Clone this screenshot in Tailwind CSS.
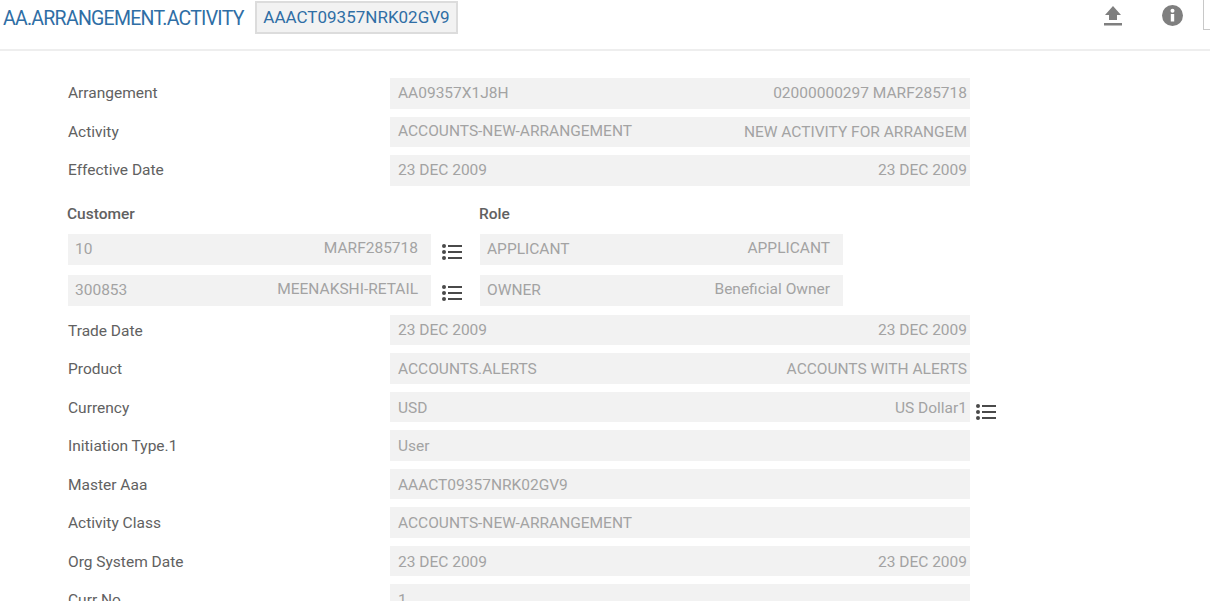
<!DOCTYPE html>
<html><head><meta charset="utf-8"><script src="https://cdn.jsdelivr.net/npm/@tailwindcss/browser@4"></script></head>
<body class="bg-white overflow-hidden font-['Roboto',sans-serif]">
<div class="h-[601px] w-[1210px] overflow-hidden">
<header class="h-[51px] border-b-2 border-[#eeeeee] flex items-start pl-[3px] relative">
  <h1 class="w-[241px] whitespace-nowrap text-[19.5px] tracking-[-0.74px] text-[#2f6ea5] leading-[36px] pt-px">AA.ARRANGEMENT.ACTIVITY</h1>
  <div class="ml-[11px] mt-px h-[33px] w-[203px] bg-[#f2f2f2] border-2 border-[#dcdcdc] text-[#2f6ea5] text-[17px] leading-[29px] text-center">AAACT09357NRK02GV9</div>
  <svg class="ml-[645px] mt-[5px]" width="20" height="22" viewBox="0 0 20 22"><path d="M10 1 L18 10 H14 V15 H6 V10 H2 Z M1 18 H19 V20.5 H1 Z" fill="#7f7f7f"/></svg>
  <svg class="ml-[39px] mt-[5px]" width="21" height="21" viewBox="0 0 21 21"><circle cx="10.5" cy="10.5" r="10.5" fill="#7f7f7f"/><rect x="8.8" y="9" width="3.4" height="7.5" fill="#fff"/><circle cx="10.5" cy="5.8" r="2" fill="#fff"/></svg>
  <div class="absolute left-[1203px] top-0 w-[7px] h-[30px] border-l border-b border-[#c8c8c8]"></div>
</header>

<main class="pt-[27px] text-[15.5px]">
  <div class="flex flex-col gap-[8px]">
    <div class="flex h-[30.5px] items-center"><span class="pl-[68px] w-[390px] text-[#616161] pt-px">Arrangement</span><div class="w-[580px] h-full bg-[#f2f2f2] flex justify-between items-center pl-2 pr-[3px] text-[#a3a3a3]"><span>AA09357X1J8H</span><span>02000000297 MARF285718</span></div></div>
    <div class="flex h-[30.5px] items-center"><span class="pl-[68px] w-[390px] text-[#616161] pt-px">Activity</span><div class="w-[580px] h-full bg-[#f2f2f2] flex justify-between items-center pl-2 pr-[3px] text-[#a3a3a3]"><span>ACCOUNTS-NEW-ARRANGEMENT</span><span class="pt-px">NEW ACTIVITY FOR ARRANGEM</span></div></div>
    <div class="flex h-[30.5px] items-center"><span class="pl-[68px] w-[390px] text-[#616161] pt-px">Effective Date</span><div class="w-[580px] h-full bg-[#f2f2f2] flex justify-between items-center pl-2 pr-[3px] text-[#a3a3a3]"><span>23 DEC 2009</span><span class="pt-px">23 DEC 2009</span></div></div>
  </div>

  <div class="flex mt-[17px] h-[22px] text-[#616161] font-medium text-[15.5px] leading-[22px]"><span class="pl-[67px] w-[479px]">Customer</span><span>Role</span></div>

  <div class="flex mt-[9px] h-[31px] pl-[68px]">
    <div class="w-[363px] bg-[#f2f2f2] flex justify-between pl-[7px] pr-[13px] text-[#a3a3a3] leading-[29px]"><span class="pt-px">10</span><span>MARF285718</span></div>
    <svg class="ml-[11px] mt-[10px]" width="20" height="16" viewBox="0 0 20 16"><g fill="#4a4a4a"><circle cx="2" cy="2" r="2"/><circle cx="2" cy="8" r="2"/><circle cx="2" cy="14" r="2"/><rect x="6" y="1" width="14" height="2"/><rect x="6" y="7" width="14" height="2"/><rect x="6" y="13" width="14" height="2"/></g></svg>
    <div class="ml-[18px] w-[363px] bg-[#f2f2f2] flex justify-between pl-[7px] pr-[13px] text-[#a3a3a3] leading-[29px]"><span class="pt-px">APPLICANT</span><span>APPLICANT</span></div>
  </div>
  <div class="flex mt-[10px] h-[31px] pl-[68px]">
    <div class="w-[363px] bg-[#f2f2f2] flex justify-between pl-[7px] pr-[13px] text-[#a3a3a3] leading-[29px]"><span class="pt-px">300853</span><span>MEENAKSHI-RETAIL</span></div>
    <svg class="ml-[11px] mt-[10px]" width="20" height="16" viewBox="0 0 20 16"><g fill="#4a4a4a"><circle cx="2" cy="2" r="2"/><circle cx="2" cy="8" r="2"/><circle cx="2" cy="14" r="2"/><rect x="6" y="1" width="14" height="2"/><rect x="6" y="7" width="14" height="2"/><rect x="6" y="13" width="14" height="2"/></g></svg>
    <div class="ml-[18px] w-[363px] bg-[#f2f2f2] flex justify-between pl-[7px] pr-[13px] text-[#a3a3a3] leading-[29px]"><span class="pt-px">OWNER</span><span>Beneficial Owner</span></div>
  </div>

  <div class="flex flex-col gap-[8px] mt-[9px]">
    <div class="flex h-[30.5px] items-center"><span class="pl-[68px] w-[390px] text-[#616161] pt-[3px]">Trade Date</span><div class="w-[580px] h-full bg-[#f2f2f2] flex justify-between items-center pl-2 pr-[3px] text-[#a3a3a3] pt-[2px]"><span>23 DEC 2009</span><span>23 DEC 2009</span></div></div>
    <div class="flex h-[30.5px] items-center"><span class="pl-[68px] w-[390px] text-[#616161] pt-[3px]">Product</span><div class="w-[580px] h-full bg-[#f2f2f2] flex justify-between items-center pl-2 pr-[3px] text-[#a3a3a3] pt-[2px]"><span>ACCOUNTS.ALERTS</span><span class="pt-px">ACCOUNTS WITH ALERTS</span></div></div>
    <div class="flex h-[30.5px] items-center"><span class="pl-[68px] w-[390px] text-[#616161] pt-[3px]">Currency</span><div class="w-[580px] h-full bg-[#f2f2f2] flex justify-between items-center pl-2 pr-[3px] text-[#a3a3a3] pt-[3px]"><span>USD</span><span>US Dollar1</span></div><svg class="ml-[6px] mt-[11px]" width="20" height="16" viewBox="0 0 20 16"><g fill="#4a4a4a"><circle cx="2" cy="2" r="2"/><circle cx="2" cy="8" r="2"/><circle cx="2" cy="14" r="2"/><rect x="6" y="1" width="14" height="2"/><rect x="6" y="7" width="14" height="2"/><rect x="6" y="13" width="14" height="2"/></g></svg></div>
    <div class="flex h-[30.5px] items-center"><span class="pl-[68px] w-[390px] text-[#616161] pt-[3px]">Initiation Type.1</span><div class="w-[580px] h-full bg-[#f2f2f2] flex items-center pl-2 text-[#a3a3a3] pt-[2px]"><span>User</span></div></div>
    <div class="flex h-[30.5px] items-center"><span class="pl-[68px] w-[390px] text-[#616161] pt-[3px]">Master Aaa</span><div class="w-[580px] h-full bg-[#f2f2f2] flex items-center pl-2 text-[#a3a3a3] pt-[3px]"><span>AAACT09357NRK02GV9</span></div></div>
    <div class="flex h-[30.5px] items-center"><span class="pl-[68px] w-[390px] text-[#616161] pt-[3px]">Activity Class</span><div class="w-[580px] h-full bg-[#f2f2f2] flex items-center pl-2 text-[#a3a3a3] pt-[3px]"><span>ACCOUNTS-NEW-ARRANGEMENT</span></div></div>
    <div class="flex h-[30.5px] items-center"><span class="pl-[68px] w-[390px] text-[#616161] pt-[3px]">Org System Date</span><div class="w-[580px] h-full bg-[#f2f2f2] flex justify-between items-center pl-2 pr-[3px] text-[#a3a3a3] pt-[3px]"><span>23 DEC 2009</span><span class="pt-px">23 DEC 2009</span></div></div>
    <div class="flex h-[30.5px] items-center"><span class="pl-[68px] w-[390px] text-[#616161] pt-[3px]">Curr No</span><div class="w-[580px] h-full bg-[#f2f2f2] flex items-center pl-2 text-[#a3a3a3] pt-[3px]"><span>1</span></div></div>
  </div>
</main>
</div>
</body></html>
